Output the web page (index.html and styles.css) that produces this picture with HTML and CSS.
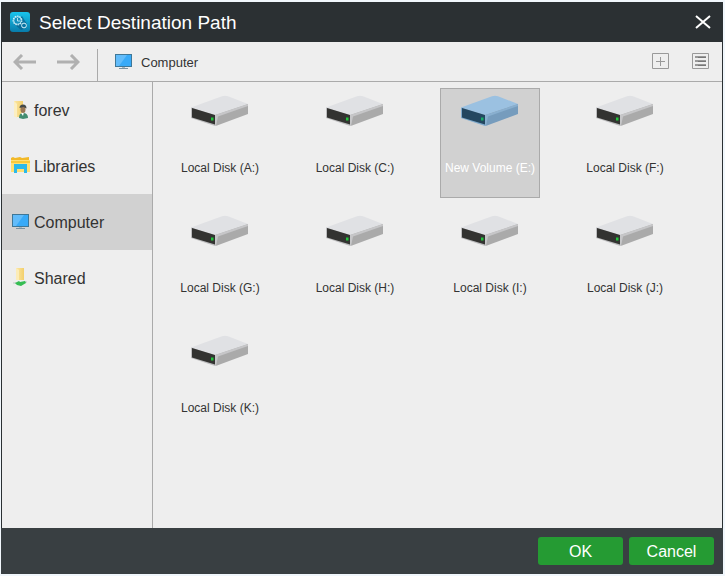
FILE: index.html
```html
<!DOCTYPE html>
<html lang="en">
<head>
<meta charset="utf-8">
<title>Select Destination Path</title>
<link rel="stylesheet" href="styles.css">
</head>
<body>
<svg class="defs" aria-hidden="true">
  <defs>
    <linearGradient id="appfill" x1="0" y1="0" x2="0" y2="1">
      <stop offset="0" stop-color="#19c5ee"/><stop offset="1" stop-color="#087baa"/>
    </linearGradient>
    <linearGradient id="folder" x1="0" y1="0" x2="1" y2="0">
      <stop offset="0" stop-color="#fbe7a6"/><stop offset="1" stop-color="#f3cf6b"/>
    </linearGradient>
    <symbol id="monitor" viewBox="0 0 18 16">
      <path fill="#3f7797" d="M0 0h17v13H0z"/>
      <path fill="#38aaf8" d="M1 1h15v11H1z"/>
      <path fill="#62bcfa" d="M1 1h11L4 12H1z"/>
      <path fill="#a9b8c1" d="M7 13h3v1H7z"/>
      <path fill="#7b929f" d="M4 14h9v1H4z"/>
    </symbol>
    <symbol id="disk" viewBox="0 0 58 32">
      <path fill="#e0e1e4" d="M0 12.500 31 1.200q3-.8 6 0L57 9 24 20z"/>
      <path fill="#aaa" d="m24 20 33-11v10L26 30.500l-2 .5z"/>
      <path fill="#c6c6c8" d="m24 20 33-11v2L27 21.500 25 31h-1z"/>
      <path fill="#bcbcbe" d="m0 12.500 24 7.500v11L0 23z"/>
      <path fill="#333331" d="m1 13 23 7v9.500L1 22.500z"/>
      <path fill="#22c63c" d="M20 22.500h2.500V25.500H20z"/>
    </symbol>
    <symbol id="disk-selected" viewBox="0 0 58 32">
      <path fill="#9bc1e1" d="M0 12.500 31 1.200q3-.8 6 0L57 9 24 20z"/>
      <path fill="#769cbd" d="m24 20 33-11v10L26 30.500l-2 .5z"/>
      <path fill="#89afcf" d="m24 20 33-11v2L27 21.500 25 31h-1z"/>
      <path fill="#7fa9cc" d="m0 12.500 24 7.500v11L0 23z"/>
      <path fill="#244760" d="m1 13 23 7v9.500L1 22.500z"/>
      <path fill="#17ae67" d="M20 22.500h2.500V25.500H20z"/>
    </symbol>
  </defs>
</svg>
<div class="dialog">
  <header class="titlebar">
    <svg class="app-icon" viewBox="0 0 20 20" aria-hidden="true">
      <rect width="20" height="20" rx="3" fill="url(#appfill)"/>
      <path fill="#075c88" opacity=".65" d="m4 12 8-8 5 8-1 4-5 2z"/>
      <circle cx="7.500" cy="8.500" r="4.300" fill="none" stroke="#d5f4fc" stroke-width="1.200" stroke-dasharray="1.600 .8"/>
      <circle cx="7.500" cy="8.500" r="3.700" fill="#118fbd" stroke="#d5f4fc" stroke-width=".7"/>
      <path fill="none" stroke="#d5f4fc" stroke-width=".8" d="M7.500 6v3H10"/>
      <circle cx="14" cy="13.500" r="2.400" fill="#0874a2" stroke="#d5f4fc"/>
    </svg>
    <h1>Select Destination Path</h1>
    <button class="icon-button" type="button" aria-label="Close">
      <svg width="18" height="16" viewBox="0 0 18 16"><path fill="none" stroke="#fff" stroke-width="2" d="m2 2 14 12M16 2 2 14"/></svg>
    </button>
  </header>
  <div class="toolbar">
    <div class="history">
      <button class="icon-button" type="button" aria-label="Back">
        <svg width="23" height="16" viewBox="0 0 23 16"><path fill="none" stroke="#b0b0b0" stroke-width="3" d="M23 8H3M9 1 2 8l7 7"/></svg>
      </button>
      <button class="icon-button" type="button" aria-label="Forward">
        <svg width="23" height="16" viewBox="0 0 23 16"><path fill="none" stroke="#b0b0b0" stroke-width="3" d="M0 8h20M14 1l7 7-7 7"/></svg>
      </button>
    </div>
    <div class="location">
      <svg class="small-icon" aria-hidden="true"><use href="#monitor"/></svg>
      <span>Computer</span>
    </div>
    <div class="actions">
      <button class="icon-button" type="button" aria-label="New folder">
        <svg width="17" height="16" viewBox="0 0 17 16"><path fill="none" stroke="#999" d="M.5.500h16v15H.5zM4 8.500h9M8.500 4v9"/></svg>
      </button>
      <button class="icon-button" type="button" aria-label="View as list">
        <svg width="17" height="16" viewBox="0 0 17 16"><path fill="none" stroke="#999" d="M.5.500h16v15H.5z"/><path fill="none" stroke="#999" stroke-width="2" d="M3 4h11M3 8h11M3 12h11"/><path fill="none" stroke="#777" d="M6 4.500h8M6 8.500h8M6 12.500h8"/></svg>
      </button>
    </div>
  </div>
  <div class="content">
    <nav class="sidebar" aria-label="Places">
      <a href="#forev">
        <svg class="place-icon" viewBox="0 0 20 20" aria-hidden="true">
          <path fill="url(#folder)" d="M3 1h9v16H5l-2-1z"/><path fill="#fcefc2" d="M3 1l3 3v14l-3-2z"/>
          <path fill="#438d70" d="M8 18q0-5 4-5 5 0 5 5l-5 1z"/><path fill="#fff" d="m10 13 3-1-1 4z"/>
          <ellipse cx="12" cy="9.500" rx="2.500" ry="3.500" fill="#9a7755"/><path fill="#444a4a" d="M8.500 8q0-3.500 3.500-3.500 3.500 0 3.500 4l-3-1.500z"/>
        </svg>
        <span>forev</span>
      </a>
      <a href="#libraries">
        <svg class="place-icon" viewBox="0 0 20 20" aria-hidden="true">
          <path fill="#f2b928" d="M0 2l2-1 2 1 5-1 2 1 7-1v4H0z"/><path fill="#ffe073" d="M0 4h19v12H0z"/>
          <path fill="#f9c93a" d="M0 5h19v2H0z"/><path fill="#2bb9e9" d="M3 8h13v9h-3v-4H6v4H3z"/>
        </svg>
        <span>Libraries</span>
      </a>
      <a class="current" href="#computer" aria-current="page">
        <svg class="place-icon" viewBox="-1 -2 20 20" aria-hidden="true"><use href="#monitor" width="18" height="16"/></svg>
        <span>Computer</span>
      </a>
      <a href="#shared">
        <svg class="place-icon" viewBox="0 0 20 20" aria-hidden="true">
          <path fill="url(#folder)" d="M5 0h8v12H5z"/><path fill="#fcecb8" d="m5 0 3 2v10H5z"/>
          <path fill="#d6dada" d="M2 14h3v2H2zM13 13h3v2h-3z"/><path fill="#35bd53" d="m4 15 4-2 1 1 5-1 1 2-5 3-4-1z"/>
        </svg>
        <span>Shared</span>
      </a>
    </nav>
    <main class="disks">
      <button class="disk" type="button"><svg aria-hidden="true"><use href="#disk"/></svg><span>Local Disk (A:)</span></button>
      <button class="disk" type="button"><svg aria-hidden="true"><use href="#disk"/></svg><span>Local Disk (C:)</span></button>
      <button class="disk selected" type="button" aria-pressed="true"><svg aria-hidden="true"><use href="#disk-selected"/></svg><span>New Volume (E:)</span></button>
      <button class="disk" type="button"><svg aria-hidden="true"><use href="#disk"/></svg><span>Local Disk (F:)</span></button>
      <button class="disk" type="button"><svg aria-hidden="true"><use href="#disk"/></svg><span>Local Disk (G:)</span></button>
      <button class="disk" type="button"><svg aria-hidden="true"><use href="#disk"/></svg><span>Local Disk (H:)</span></button>
      <button class="disk" type="button"><svg aria-hidden="true"><use href="#disk"/></svg><span>Local Disk (I:)</span></button>
      <button class="disk" type="button"><svg aria-hidden="true"><use href="#disk"/></svg><span>Local Disk (J:)</span></button>
      <button class="disk" type="button"><svg aria-hidden="true"><use href="#disk"/></svg><span>Local Disk (K:)</span></button>
    </main>
  </div>
  <footer class="footer">
    <button type="button">OK</button>
    <button type="button">Cancel</button>
  </footer>
</div>
</body>
</html>
```
FILE: styles.css
```css
* {
  box-sizing: border-box;
}

body {
  display: flex;
  min-height: 100vh;
  margin: 0;
  padding: 2px 2px 2px 1px;
  background: #f1f7fc;
  color: #333;
  font-family: "Liberation Sans", Arial, sans-serif;
  font-size: 16px;
}

button {
  padding: 0;
  border: 0;
  color: inherit;
  font: inherit;
}

svg {
  display: block;
  flex: none;
}

.defs {
  position: absolute;
  width: 0;
  height: 0;
}

.dialog {
  display: flex;
  flex: 1;
  flex-direction: column;
  background: #eee;
}

.titlebar {
  display: flex;
  align-items: center;
  height: 40px;
  padding: 0 11px 0 9px;
  background: #2b3033;
  color: #fff;
}

.app-icon {
  width: 20px;
  height: 20px;
}

h1 {
  flex: 1;
  margin: 0 0 0 9px;
  padding-top: 2px;
  font-size: 19px;
  font-weight: 400;
}

.icon-button {
  background: none;
}

.toolbar {
  display: flex;
  align-items: center;
  height: 40px;
  border: solid #2b3033;
  border-width: 0 1px;
  box-shadow: inset 0 -1px #aaa;
}

.history {
  display: flex;
  align-items: center;
  align-self: stretch;
  gap: 21px;
  margin-top: 7px;
  padding: 0 17px 7px 11px;
  border-right: 1px solid #aaa;
}

.location {
  display: flex;
  flex: 1;
  align-items: center;
  gap: 8px;
  padding-left: 17px;
  font-size: 13px;
}

.small-icon {
  width: 18px;
  height: 16px;
}

.actions {
  display: flex;
  gap: 23px;
  padding: 0 13px 2px 0;
}

.content {
  display: flex;
  flex: 1;
  border: solid #2b3033;
  border-width: 0 1px;
}

.sidebar {
  width: 151px;
  border-right: 1px solid #aaa;
}

.sidebar a {
  display: flex;
  align-items: center;
  gap: 3px;
  height: 56px;
  padding-left: 9px;
  color: #333;
  text-decoration: none;
}

.sidebar span {
  padding-top: 2px;
}

.sidebar .current {
  background: #d1d1d1;
}

.place-icon {
  width: 20px;
  height: 20px;
}

.disks {
  display: grid;
  flex: 1;
  grid-template-columns: repeat(auto-fill, 100px);
  grid-auto-rows: 110px;
  align-content: start;
  gap: 10px 35px;
  padding: 6px 17px;
}

.disk {
  display: flex;
  flex-direction: column;
  align-items: center;
  gap: 34px;
  padding-top: 6px;
  border: 1px solid transparent;
  background: none;
  font-size: 12px;
  line-height: 14px;
  white-space: nowrap;
}

.disk svg {
  width: 58px;
  height: 32px;
}

.disk.selected {
  border-color: #aaa;
  background: #d1d1d1;
  color: #fff;
}

.footer {
  display: flex;
  align-items: center;
  justify-content: flex-end;
  gap: 6px;
  height: 46px;
  padding: 0 9px;
  background: #393f42;
}

.footer button {
  width: 85px;
  height: 28px;
  padding-top: 1px;
  border-radius: 3px;
  background: #259b33;
  color: #fff;
}
```
